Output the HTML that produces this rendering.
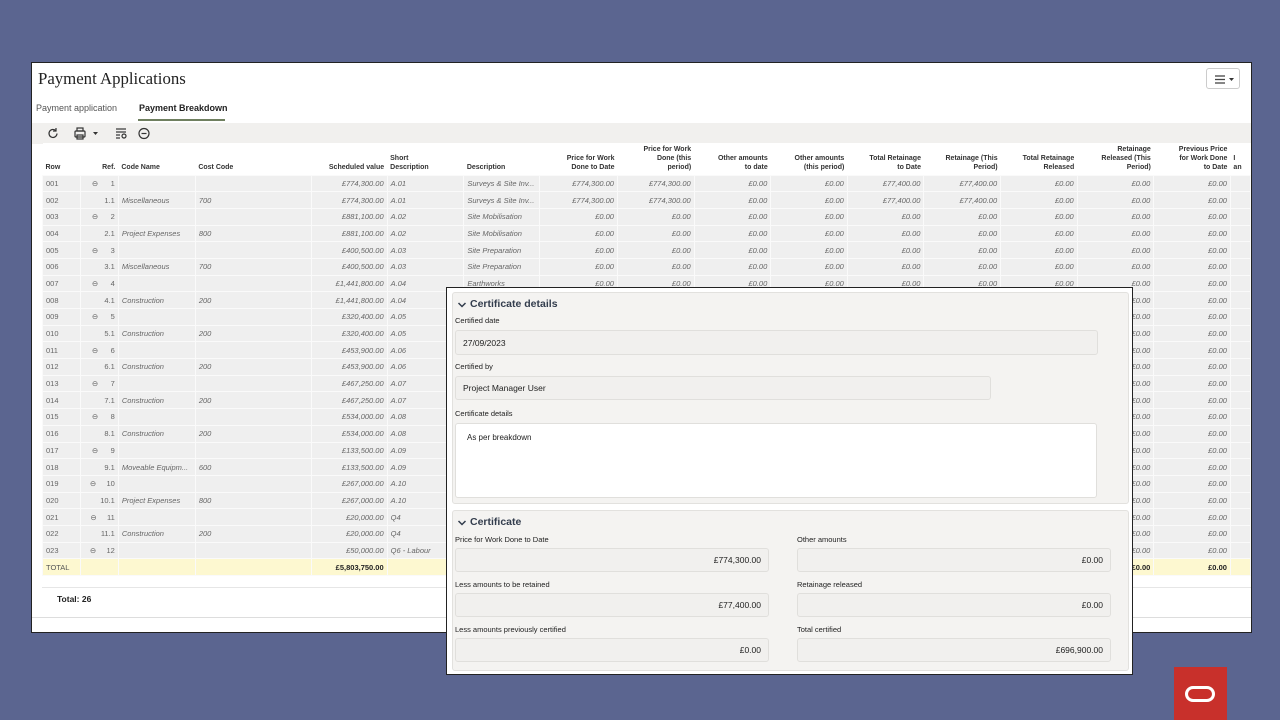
<!DOCTYPE html>
<html><head><meta charset="utf-8"><style>
*{box-sizing:border-box;margin:0;padding:0}
body{width:1280px;height:720px;overflow:hidden;background:#5b6590;font-family:"Liberation Sans",sans-serif;position:relative}
.main{position:absolute;left:31px;top:62px;width:1221px;height:571px;background:#fff;border:1px solid #222;overflow:hidden}
.title{position:absolute;left:6px;top:6px;font-family:"Liberation Serif",serif;font-size:16.8px;color:#222}
.menu{position:absolute;left:1174px;top:5px;width:34px;height:21px;border:1px solid #ccc;border-radius:3px;background:#fff}
.tabs{position:absolute;left:4px;top:40px;font-size:9px;color:#555}
.tab2{position:absolute;left:103px;top:0;color:#222;font-weight:bold;white-space:nowrap}
.tabline{position:absolute;left:102px;top:16px;width:87px;height:2px;background:#6f7f5f}
.toolbar{position:absolute;left:0;top:60px;width:1221px;height:21px;background:#f1f0ee}
table{position:absolute;left:10px;top:80px;border-collapse:collapse;table-layout:fixed;font-size:7.5px;color:#666}
th{height:32px;font-size:7px;color:#333;font-weight:bold;vertical-align:bottom;padding:0 3px 3px;text-align:right;line-height:9px;background:#fff}
th.l{text-align:left}
td{height:16.7px;background:#efefef;border:1px solid #fafafa;padding:0 3px;font-style:italic;text-align:right;white-space:nowrap;overflow:hidden}
td.n{font-style:normal;text-align:left}
td.r{font-style:normal}
td.i{text-align:left}
tr.tot td{background:#fdf8d0;font-style:normal;font-weight:bold;color:#222}
.ov{position:absolute;left:446px;top:287px;width:687px;height:388px;background:#fff;border:1px solid #222}
.sec{position:absolute;left:5px;background:#f4f3f1;border:1px solid #e2e1de;border-radius:3px;width:677px}
.h{position:absolute;font-size:10.5px;font-weight:bold;color:#333d4d}
.lb{position:absolute;font-size:7.5px;color:#222}
.in{position:absolute;background:#f1f0ee;border:1px solid #e0dfdc;border-radius:3px;font-size:8.5px;color:#222;padding:0 7px;display:flex;align-items:center}
.in.r{justify-content:flex-end}
.logo{position:absolute;left:1174px;top:667px;width:53px;height:53px;background:#c8302b}
</style></head><body>
<div class="main">
<div class="title">Payment Applications</div>
<div class="menu"><svg width="34" height="21"><g stroke="#444" stroke-width="1.3"><line x1="8" y1="7" x2="18" y2="7"/><line x1="8" y1="10.5" x2="18" y2="10.5"/><line x1="8" y1="14" x2="18" y2="14"/></g><path d="M22 9h5l-2.5 3z" fill="#333"/></svg></div>
<div class="tabs">Payment application<span class="tab2">Payment Breakdown</span><div class="tabline"></div></div>
<div class="toolbar"><svg width="140" height="21"><g fill="none" stroke="#333" stroke-width="1.2"><path d="M25 10.5a4 4 0 1 1-1.2-2.9"/><path d="M24 5v3h-3"/><rect x="43" y="8" width="10" height="6" rx="1"/><rect x="45" y="5" width="6" height="3"/><rect x="45" y="12" width="6" height="4"/><line x1="84" y1="6" x2="94" y2="6"/><line x1="84" y1="9" x2="94" y2="9"/><line x1="84" y1="12" x2="88" y2="12"/><line x1="84" y1="15" x2="88" y2="15"/><circle cx="92" cy="13" r="2"/><circle cx="112" cy="10.5" r="5"/><line x1="109.5" y1="10.5" x2="114.5" y2="10.5"/></g><path d="M61 9h5l-2.5 3z" fill="#333"/></svg></div>
<table>
<colgroup><col style="width:38px"><col style="width:38px"><col style="width:77px"><col style="width:117px"><col style="width:76px"><col style="width:77px"><col style="width:76px"><col style="width:78px"><col style="width:77px"><col style="width:77px"><col style="width:77px"><col style="width:77px"><col style="width:77px"><col style="width:77px"><col style="width:77px"><col style="width:77px"><col style="width:20px"></colgroup>
<tr><th class="l">Row</th><th>Ref.</th><th class="l">Code Name</th><th class="l">Cost Code</th><th>Scheduled value</th><th class="l">Short<br>Description</th><th class="l">Description</th><th>Price for Work<br>Done to Date</th><th>Price for Work<br>Done (this<br>period)</th><th>Other amounts<br>to date</th><th>Other amounts<br>(this period)</th><th>Total Retainage<br>to Date</th><th>Retainage (This<br>Period)</th><th>Total Retainage<br>Released</th><th>Retainage<br>Released (This<br>Period)</th><th>Previous Price<br>for Work Done<br>to Date</th><th class="l">I<br>an</th></tr>
<tr><td class="n">001</td><td class="r">⊖ &nbsp;&nbsp;&nbsp;&nbsp;&nbsp;1</td><td></td><td></td><td>£774,300.00</td><td class="i">A.01</td><td class="i">Surveys &amp; Site Inv...</td><td>£774,300.00</td><td>£774,300.00</td><td>£0.00</td><td>£0.00</td><td>£77,400.00</td><td>£77,400.00</td><td>£0.00</td><td>£0.00</td><td>£0.00</td><td></td></tr>
<tr><td class="n">002</td><td class="r">1.1</td><td class="i">Miscellaneous</td><td class="i">700</td><td>£774,300.00</td><td class="i">A.01</td><td class="i">Surveys &amp; Site Inv...</td><td>£774,300.00</td><td>£774,300.00</td><td>£0.00</td><td>£0.00</td><td>£77,400.00</td><td>£77,400.00</td><td>£0.00</td><td>£0.00</td><td>£0.00</td><td></td></tr>
<tr><td class="n">003</td><td class="r">⊖ &nbsp;&nbsp;&nbsp;&nbsp;&nbsp;2</td><td></td><td></td><td>£881,100.00</td><td class="i">A.02</td><td class="i">Site Mobilisation</td><td>£0.00</td><td>£0.00</td><td>£0.00</td><td>£0.00</td><td>£0.00</td><td>£0.00</td><td>£0.00</td><td>£0.00</td><td>£0.00</td><td></td></tr>
<tr><td class="n">004</td><td class="r">2.1</td><td class="i">Project Expenses</td><td class="i">800</td><td>£881,100.00</td><td class="i">A.02</td><td class="i">Site Mobilisation</td><td>£0.00</td><td>£0.00</td><td>£0.00</td><td>£0.00</td><td>£0.00</td><td>£0.00</td><td>£0.00</td><td>£0.00</td><td>£0.00</td><td></td></tr>
<tr><td class="n">005</td><td class="r">⊖ &nbsp;&nbsp;&nbsp;&nbsp;&nbsp;3</td><td></td><td></td><td>£400,500.00</td><td class="i">A.03</td><td class="i">Site Preparation</td><td>£0.00</td><td>£0.00</td><td>£0.00</td><td>£0.00</td><td>£0.00</td><td>£0.00</td><td>£0.00</td><td>£0.00</td><td>£0.00</td><td></td></tr>
<tr><td class="n">006</td><td class="r">3.1</td><td class="i">Miscellaneous</td><td class="i">700</td><td>£400,500.00</td><td class="i">A.03</td><td class="i">Site Preparation</td><td>£0.00</td><td>£0.00</td><td>£0.00</td><td>£0.00</td><td>£0.00</td><td>£0.00</td><td>£0.00</td><td>£0.00</td><td>£0.00</td><td></td></tr>
<tr><td class="n">007</td><td class="r">⊖ &nbsp;&nbsp;&nbsp;&nbsp;&nbsp;4</td><td></td><td></td><td>£1,441,800.00</td><td class="i">A.04</td><td class="i">Earthworks</td><td>£0.00</td><td>£0.00</td><td>£0.00</td><td>£0.00</td><td>£0.00</td><td>£0.00</td><td>£0.00</td><td>£0.00</td><td>£0.00</td><td></td></tr>
<tr><td class="n">008</td><td class="r">4.1</td><td class="i">Construction</td><td class="i">200</td><td>£1,441,800.00</td><td class="i">A.04</td><td></td><td></td><td></td><td></td><td></td><td></td><td></td><td></td><td>£0.00</td><td>£0.00</td><td></td></tr>
<tr><td class="n">009</td><td class="r">⊖ &nbsp;&nbsp;&nbsp;&nbsp;&nbsp;5</td><td></td><td></td><td>£320,400.00</td><td class="i">A.05</td><td></td><td></td><td></td><td></td><td></td><td></td><td></td><td></td><td>£0.00</td><td>£0.00</td><td></td></tr>
<tr><td class="n">010</td><td class="r">5.1</td><td class="i">Construction</td><td class="i">200</td><td>£320,400.00</td><td class="i">A.05</td><td></td><td></td><td></td><td></td><td></td><td></td><td></td><td></td><td>£0.00</td><td>£0.00</td><td></td></tr>
<tr><td class="n">011</td><td class="r">⊖ &nbsp;&nbsp;&nbsp;&nbsp;&nbsp;6</td><td></td><td></td><td>£453,900.00</td><td class="i">A.06</td><td></td><td></td><td></td><td></td><td></td><td></td><td></td><td></td><td>£0.00</td><td>£0.00</td><td></td></tr>
<tr><td class="n">012</td><td class="r">6.1</td><td class="i">Construction</td><td class="i">200</td><td>£453,900.00</td><td class="i">A.06</td><td></td><td></td><td></td><td></td><td></td><td></td><td></td><td></td><td>£0.00</td><td>£0.00</td><td></td></tr>
<tr><td class="n">013</td><td class="r">⊖ &nbsp;&nbsp;&nbsp;&nbsp;&nbsp;7</td><td></td><td></td><td>£467,250.00</td><td class="i">A.07</td><td></td><td></td><td></td><td></td><td></td><td></td><td></td><td></td><td>£0.00</td><td>£0.00</td><td></td></tr>
<tr><td class="n">014</td><td class="r">7.1</td><td class="i">Construction</td><td class="i">200</td><td>£467,250.00</td><td class="i">A.07</td><td></td><td></td><td></td><td></td><td></td><td></td><td></td><td></td><td>£0.00</td><td>£0.00</td><td></td></tr>
<tr><td class="n">015</td><td class="r">⊖ &nbsp;&nbsp;&nbsp;&nbsp;&nbsp;8</td><td></td><td></td><td>£534,000.00</td><td class="i">A.08</td><td></td><td></td><td></td><td></td><td></td><td></td><td></td><td></td><td>£0.00</td><td>£0.00</td><td></td></tr>
<tr><td class="n">016</td><td class="r">8.1</td><td class="i">Construction</td><td class="i">200</td><td>£534,000.00</td><td class="i">A.08</td><td></td><td></td><td></td><td></td><td></td><td></td><td></td><td></td><td>£0.00</td><td>£0.00</td><td></td></tr>
<tr><td class="n">017</td><td class="r">⊖ &nbsp;&nbsp;&nbsp;&nbsp;&nbsp;9</td><td></td><td></td><td>£133,500.00</td><td class="i">A.09</td><td></td><td></td><td></td><td></td><td></td><td></td><td></td><td></td><td>£0.00</td><td>£0.00</td><td></td></tr>
<tr><td class="n">018</td><td class="r">9.1</td><td class="i">Moveable Equipm...</td><td class="i">600</td><td>£133,500.00</td><td class="i">A.09</td><td></td><td></td><td></td><td></td><td></td><td></td><td></td><td></td><td>£0.00</td><td>£0.00</td><td></td></tr>
<tr><td class="n">019</td><td class="r">⊖ &nbsp;&nbsp;&nbsp;&nbsp;10</td><td></td><td></td><td>£267,000.00</td><td class="i">A.10</td><td></td><td></td><td></td><td></td><td></td><td></td><td></td><td></td><td>£0.00</td><td>£0.00</td><td></td></tr>
<tr><td class="n">020</td><td class="r">10.1</td><td class="i">Project Expenses</td><td class="i">800</td><td>£267,000.00</td><td class="i">A.10</td><td></td><td></td><td></td><td></td><td></td><td></td><td></td><td></td><td>£0.00</td><td>£0.00</td><td></td></tr>
<tr><td class="n">021</td><td class="r">⊖ &nbsp;&nbsp;&nbsp;&nbsp;11</td><td></td><td></td><td>£20,000.00</td><td class="i">Q4</td><td></td><td></td><td></td><td></td><td></td><td></td><td></td><td></td><td>£0.00</td><td>£0.00</td><td></td></tr>
<tr><td class="n">022</td><td class="r">11.1</td><td class="i">Construction</td><td class="i">200</td><td>£20,000.00</td><td class="i">Q4</td><td></td><td></td><td></td><td></td><td></td><td></td><td></td><td></td><td>£0.00</td><td>£0.00</td><td></td></tr>
<tr><td class="n">023</td><td class="r">⊖ &nbsp;&nbsp;&nbsp;&nbsp;12</td><td></td><td></td><td>£50,000.00</td><td class="i">Q6 - Labour</td><td></td><td></td><td></td><td></td><td></td><td></td><td></td><td></td><td>£0.00</td><td>£0.00</td><td></td></tr>
<tr class="tot"><td class="n" style="font-weight:normal;color:#555">TOTAL</td><td></td><td></td><td></td><td>£5,803,750.00</td><td></td><td></td><td></td><td></td><td></td><td></td><td></td><td></td><td></td><td>£0.00</td><td>£0.00</td><td></td></tr>
</table>
<div style="position:absolute;left:10px;top:524px;width:1211px;height:1px;background:#e6e6e6"></div>
<div style="position:absolute;left:25px;top:531px;font-size:8.5px;font-weight:bold;color:#222">Total: 26</div>
<div style="position:absolute;left:0;top:554px;width:1221px;height:1px;background:#ddd"></div>
</div>

<div class="ov">
<div class="sec" style="top:4px;height:212px">
<svg style="position:absolute;left:4px;top:8px" width="10" height="8"><path d="M1.5 2l3.5 3.5 3.5-3.5" fill="none" stroke="#333d4d" stroke-width="1.5"/></svg>
<div class="h" style="left:17px;top:5px">Certificate details</div>
<div class="lb" style="left:2px;top:23px">Certified date</div>
<div class="in" style="left:2px;top:37px;width:643px;height:25px">27/09/2023</div>
<div class="lb" style="left:2px;top:69px">Certified by</div>
<div class="in" style="left:2px;top:83px;width:536px;height:24px">Project Manager User</div>
<div class="lb" style="left:2px;top:116px">Certificate details</div>
<div class="in" style="left:2px;top:130px;width:642px;height:75px;background:#fff;align-items:flex-start;padding:9px 11px;font-size:8px">As per breakdown</div>
</div>
<div class="sec" style="top:222px;height:161px">
<svg style="position:absolute;left:4px;top:8px" width="10" height="8"><path d="M1.5 2l3.5 3.5 3.5-3.5" fill="none" stroke="#333d4d" stroke-width="1.5"/></svg>
<div class="h" style="left:17px;top:5px">Certificate</div>
<div class="lb" style="left:2px;top:24px">Price for Work Done to Date</div>
<div class="in r" style="left:2px;top:37px;width:314px;height:24px">£774,300.00</div>
<div class="lb" style="left:344px;top:24px">Other amounts</div>
<div class="in r" style="left:344px;top:37px;width:314px;height:24px">£0.00</div>
<div class="lb" style="left:2px;top:69px">Less amounts to be retained</div>
<div class="in r" style="left:2px;top:82px;width:314px;height:24px">£77,400.00</div>
<div class="lb" style="left:344px;top:69px">Retainage released</div>
<div class="in r" style="left:344px;top:82px;width:314px;height:24px">£0.00</div>
<div class="lb" style="left:2px;top:114px">Less amounts previously certified</div>
<div class="in r" style="left:2px;top:127px;width:314px;height:24px">£0.00</div>
<div class="lb" style="left:344px;top:114px">Total certified</div>
<div class="in r" style="left:344px;top:127px;width:314px;height:24px">£696,900.00</div>
</div>
</div>

<div class="logo"><div style="position:absolute;left:11px;top:19px;width:30px;height:16px;border:3.5px solid #fff;border-radius:8px"></div></div>
</body></html>
